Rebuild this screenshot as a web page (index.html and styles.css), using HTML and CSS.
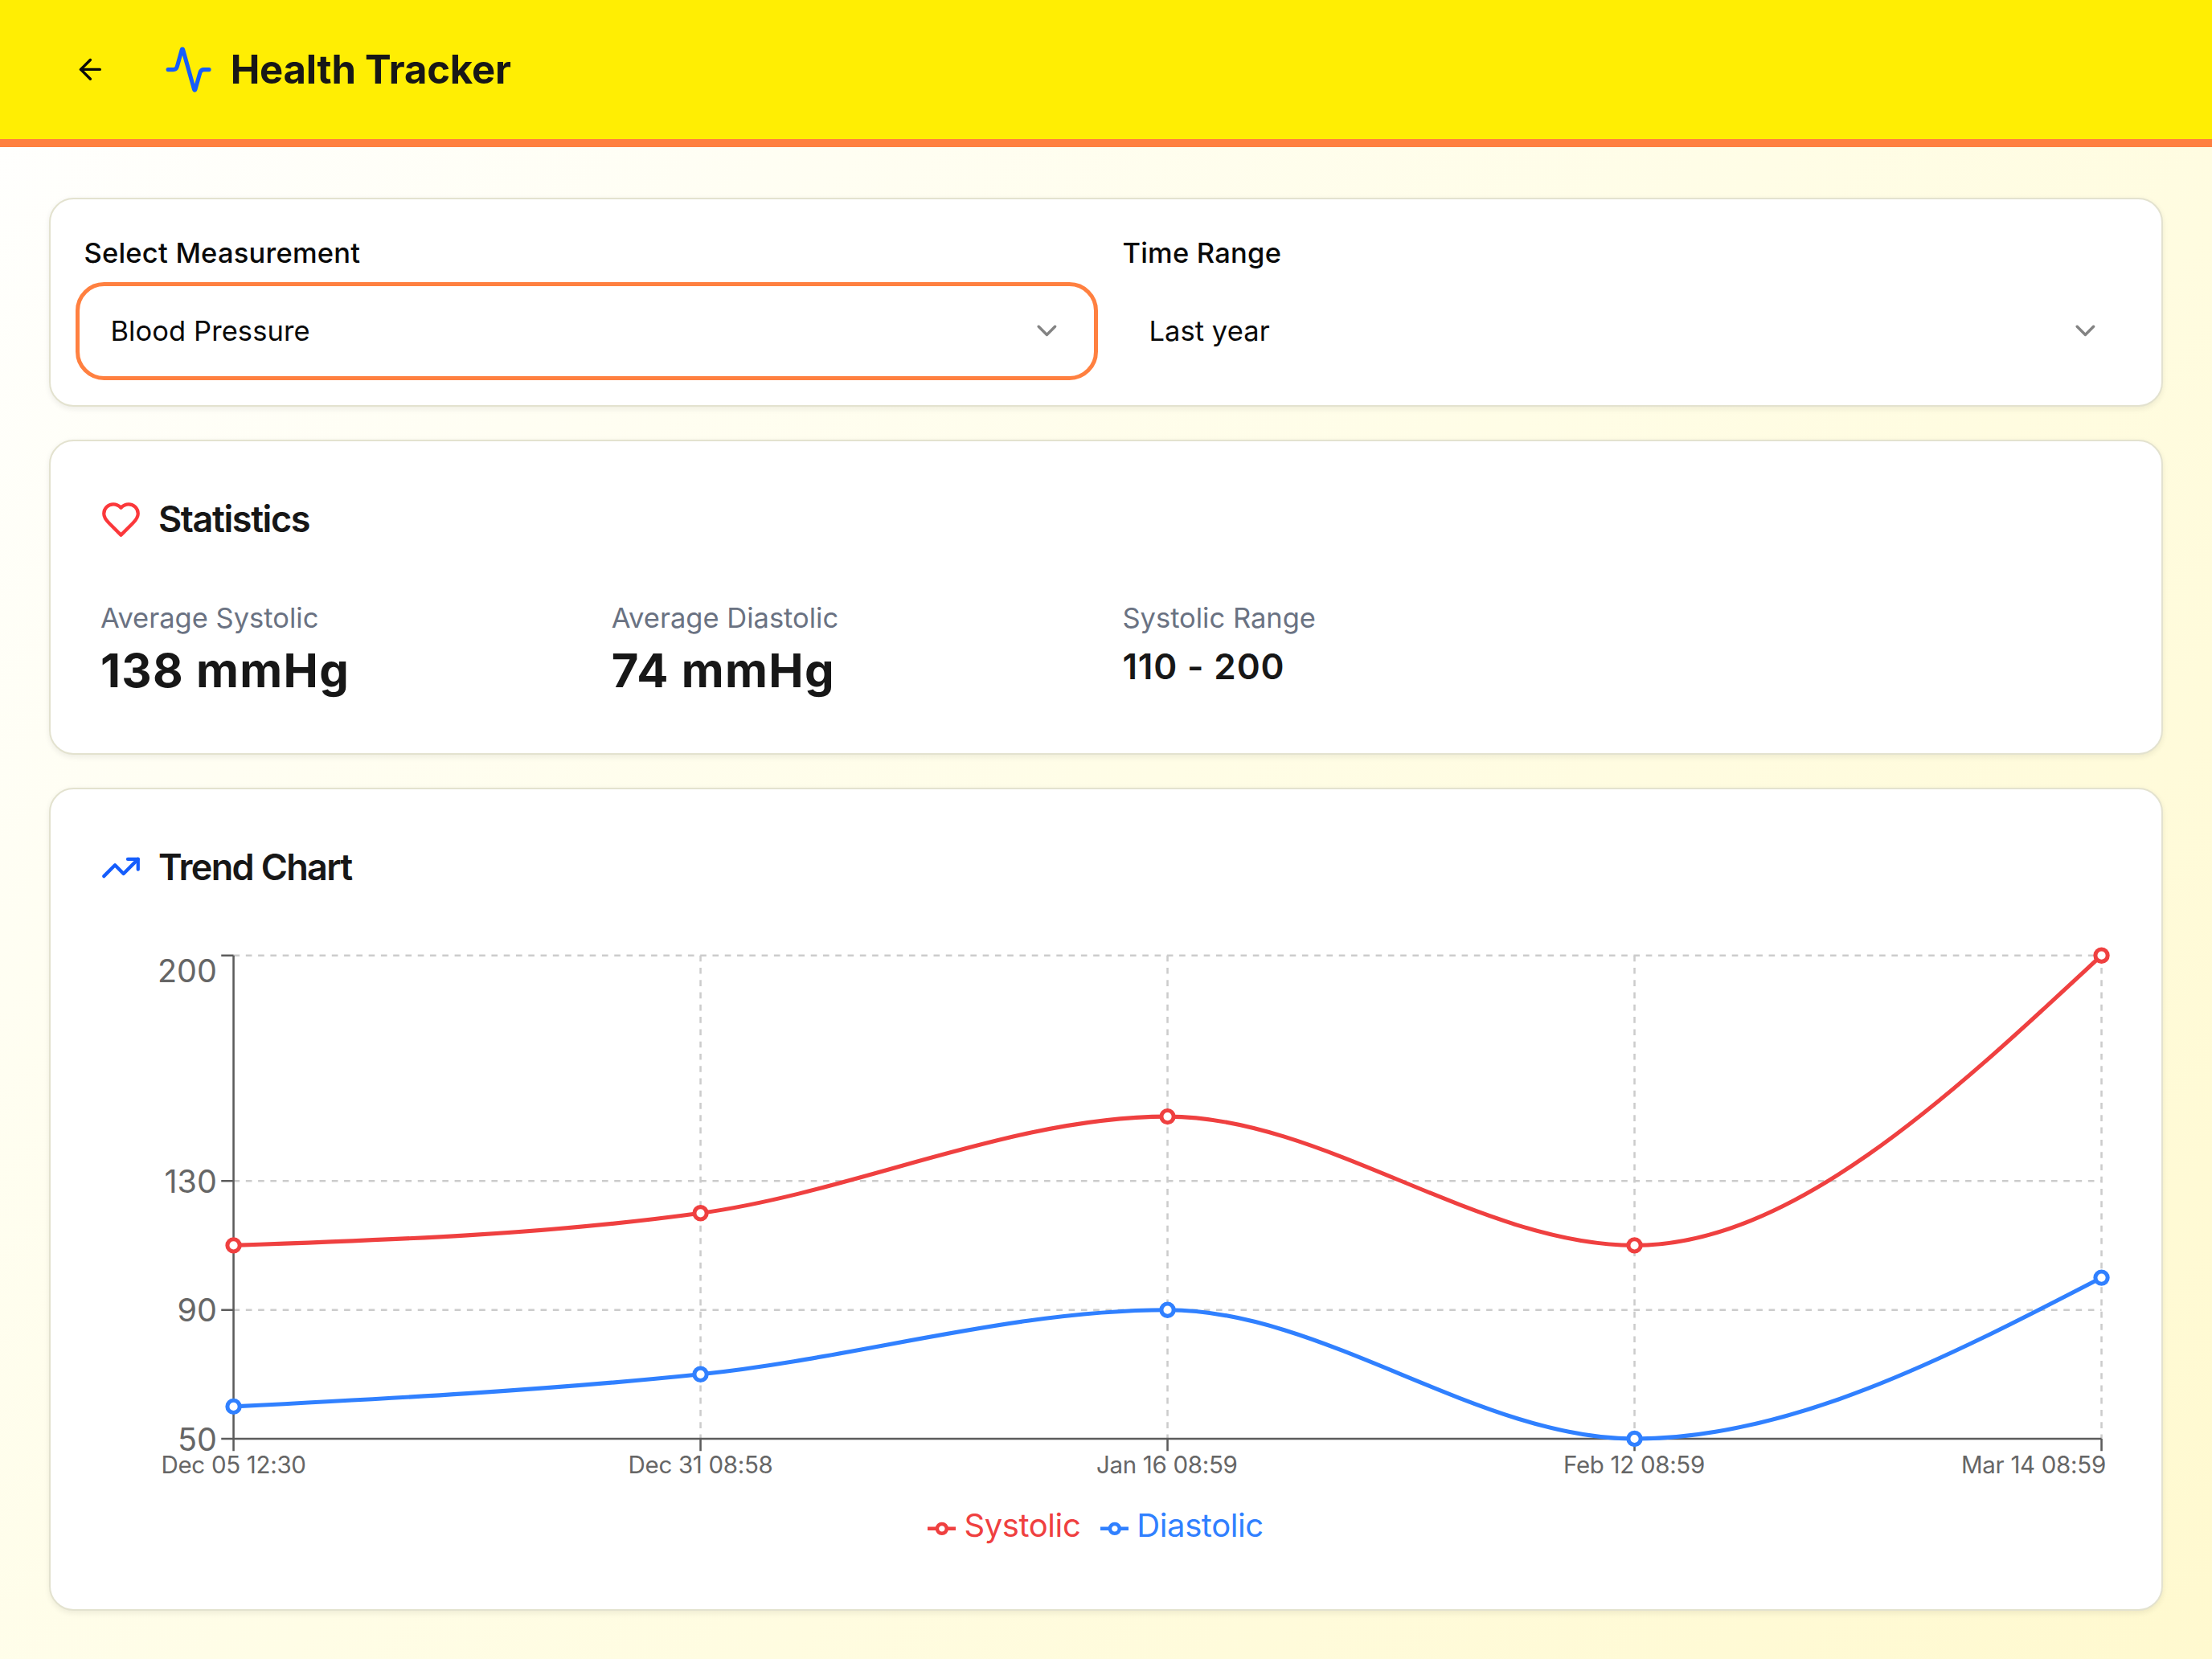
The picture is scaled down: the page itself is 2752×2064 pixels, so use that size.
FILE: index.html
```html
<!DOCTYPE html>
<html lang="en">
<head>
<meta charset="utf-8">
<title>Health Tracker</title>
<link rel="stylesheet" href="styles.css">
</head>
<body>
<header class="header">
  <button class="back" aria-label="Back">
    <svg class="icon icon-sm" viewBox="0 0 24 24"><path d="m12 19-7-7 7-7"/><path d="M19 12H5"/></svg>
  </button>
  <svg class="icon icon-lg blue" viewBox="0 0 24 24"><path d="M22 12h-2.48a2 2 0 0 0-1.93 1.46l-2.35 8.36a.25.25 0 0 1-.48 0L9.24 2.18a.25.25 0 0 0-.48 0l-2.35 8.36A2 2 0 0 1 4.49 12H2"/></svg>
  <h1 class="title">Health Tracker</h1>
</header>

<main class="main">
  <section class="card filters">
    <div class="field">
      <label class="label">Select Measurement</label>
      <button class="select select-focused">
        <span class="select-text">Blood Pressure</span>
        <svg class="icon icon-sm chevron" viewBox="0 0 24 24"><path d="m6 9 6 6 6-6"/></svg>
      </button>
    </div>
    <div class="field">
      <label class="label">Time Range</label>
      <button class="select">
        <span class="select-text">Last year</span>
        <svg class="icon icon-sm chevron" viewBox="0 0 24 24"><path d="m6 9 6 6 6-6"/></svg>
      </button>
    </div>
  </section>

  <section class="card panel stats-card">
    <h2 class="card-title">
      <svg class="icon icon-md red" viewBox="0 0 24 24"><path d="M19 14c1.49-1.46 3-3.21 3-5.5A5.5 5.5 0 0 0 16.5 3c-1.76 0-3 .5-4.5 2-1.5-1.5-2.74-2-4.5-2A5.5 5.5 0 0 0 2 8.5c0 2.3 1.5 4.05 3 5.5l7 7Z"/></svg>
      <span class="card-title-text">Statistics</span>
    </h2>
    <div class="stats">
      <div><p class="stat-label">Average Systolic</p><p class="stat-value">138 mmHg</p></div>
      <div><p class="stat-label">Average Diastolic</p><p class="stat-value">74 mmHg</p></div>
      <div><p class="stat-label">Systolic Range</p><p class="stat-range">110 - 200</p></div>
    </div>
  </section>

  <section class="card panel chart-card">
    <h2 class="card-title">
      <svg class="icon icon-md blue" viewBox="0 0 24 24"><polyline points="22 7 13.5 15.5 8.5 10.5 2 17"/><polyline points="16 7 22 7 22 13"/></svg>
      <span class="card-title-text trend-text">Trend Chart</span>
    </h2>
    <svg class="chart" viewBox="124.85 1176 2502.3 680">
      <g class="grid">
        <path d="M290.4 1188.7H2614.4M290.4 1469.3H2614.4M290.4 1629.7H2614.4"/>
        <path d="M871.4 1188.7V1790M1452.4 1188.7V1790M2033.4 1188.7V1790M2614.4 1188.7V1790"/>
      </g>
      <g class="axis">
        <path d="M290.4 1188.7V1790M290.4 1790H2614.4"/>
        <path d="M275.1 1188.7H290.4M275.1 1469.3H290.4M275.1 1629.7H290.4M275.1 1790H290.4"/>
        <path d="M290.4 1790V1805.3M871.4 1790V1805.3M1452.4 1790V1805.3M2033.4 1790V1805.3M2614.4 1790V1805.3"/>
      </g>
      <g class="y-ticks">
        <text x="269.7" y="1221.7">200</text>
        <text x="269.7" y="1483.7">130</text>
        <text x="269.7" y="1644">90</text>
        <text x="269.7" y="1804.7">50</text>
      </g>
      <g class="x-ticks">
        <text x="290.4" y="1833.3">Dec 05 12:30</text>
        <text x="871.4" y="1833.3">Dec 31 08:58</text>
        <text x="1451.6" y="1833.3">Jan 16 08:59</text>
        <text x="2032.8" y="1833.3">Feb 12 08:59</text>
        <text x="2529.8" y="1833.3">Mar 14 08:59</text>
      </g>
      <g class="series systolic">
        <path d="M290.4 1549.4C484.1 1542.7 677.7 1536 871.4 1509.3C1065.1 1482.6 1258.7 1389.1 1452.4 1389.1C1646.1 1389.1 1839.7 1549.4 2033.4 1549.4C2227.1 1549.4 2420.7 1369.1 2614.4 1188.7"/>
        <circle cx="290.4" cy="1549.4" r="7.64"/><circle cx="871.4" cy="1509.3" r="7.64"/><circle cx="1452.4" cy="1389.1" r="7.64"/><circle cx="2033.4" cy="1549.4" r="7.64"/><circle cx="2614.4" cy="1188.7" r="7.64"/>
      </g>
      <g class="series diastolic">
        <path d="M290.4 1749.9C484.1 1739.9 677.7 1729.8 871.4 1709.8C1065.1 1689.8 1258.7 1629.7 1452.4 1629.7C1646.1 1629.7 1839.7 1790 2033.4 1790C2227.1 1790 2420.7 1689.8 2614.4 1589.6"/>
        <circle cx="290.4" cy="1749.9" r="7.64"/><circle cx="871.4" cy="1709.8" r="7.64"/><circle cx="1452.4" cy="1629.7" r="7.64"/><circle cx="2033.4" cy="1790" r="7.64"/><circle cx="2614.4" cy="1589.6" r="7.64"/>
      </g>
    </svg>
    <div class="legend">
      <span class="legend-item systolic"><svg class="legend-icon" viewBox="0 0 32 32"><path d="M0 16h10.67A5.33 5.33 0 1 1 21.33 16H32M21.33 16A5.33 5.33 0 1 1 10.67 16"/></svg>Systolic</span>
      <span class="legend-item diastolic"><svg class="legend-icon" viewBox="0 0 32 32"><path d="M0 16h10.67A5.33 5.33 0 1 1 21.33 16H32M21.33 16A5.33 5.33 0 1 1 10.67 16"/></svg>Diastolic</span>
    </div>
  </section>
</main>
</body>
</html>
```
FILE: styles.css
```css
* { box-sizing: border-box; }

body {
  margin: 0;
  min-height: 2064px;
  font-family: Inter, "Liberation Sans", sans-serif;
  color: #0a0a0a;
  background: linear-gradient(135deg, #ffffff 0%, #fffde6 50%, #fff9cf 100%);
}

h1, h2, p { margin: 0; }

button {
  font: inherit;
  color: inherit;
  background: none;
  border: 0;
  padding: 0;
}

/* Icons */
.icon {
  flex: none;
  fill: none;
  stroke: currentColor;
  stroke-width: 2;
  stroke-linecap: round;
  stroke-linejoin: round;
}
.icon-sm { width: 40.8px; height: 40.8px; }
.icon-md { width: 51px; height: 51px; }
.icon-lg { width: 61.2px; height: 61.2px; }
.blue { color: #155dfc; }
.red { color: #fb383b; }

/* Header */
.header {
  display: flex;
  align-items: center;
  height: 183px;
  padding: 0 61.15px;
  background: #ffee03;
  border-bottom: 10px solid #ff8040;
}
.back {
  display: flex;
  align-items: center;
  justify-content: center;
  width: 102px;
  height: 102px;
  margin-right: 40.8px;
}
.title {
  margin-left: 21.5px;
  font-size: 49px;
  line-height: 71px;
  font-weight: 700;
  letter-spacing: -0.2px;
  color: #171717;
}

/* Cards */
.main {
  display: flex;
  flex-direction: column;
  gap: 41px;
  padding: 63px 61.15px 61px;
}
.card {
  background: #fff;
  border: 2.55px solid #e3e2cf;
  border-radius: 30.6px;
  box-shadow: 0 2.5px 7px rgba(0, 0, 0, .07);
}
.filters {
  display: grid;
  grid-template-columns: 1fr 1fr;
  gap: 40.8px;
  height: 259.7px;
  padding: 41.3px;
}
.field {
  display: flex;
  flex-direction: column;
  gap: 20.4px;
}
.label {
  font-size: 34.5px;
  line-height: 51px;
  font-weight: 500;
  letter-spacing: 0.23px;
}
.select {
  display: flex;
  align-items: center;
  justify-content: space-between;
  height: 102px;
  padding: 0 33px;
  border-radius: 25.5px;
}
.select-focused {
  outline: 5.1px solid #ff8040;
  outline-offset: 5.1px;
}
.select-text {
  font-size: 34.5px;
  letter-spacing: 0.08px;
}
.chevron { opacity: .5; }

.panel {
  display: flex;
  flex-direction: column;
  gap: 61.2px;
  padding: 61.8px;
}
.stats-card { height: 392.4px; }
.chart-card { height: 1023.5px; }
.card-title {
  display: flex;
  align-items: center;
  gap: 21px;
  height: 71.3px;
  font-size: 45px;
  line-height: 71px;
  font-weight: 600;
  color: #171717;
}
.card-title-text {
  letter-spacing: -1.4px;
  padding-bottom: 2px;
}
.trend-text { letter-spacing: -1.65px; }

/* Statistics */
.stats {
  display: grid;
  grid-template-columns: repeat(4, 1fr);
  gap: 40.8px;
}
.stat-label {
  font-size: 34.5px;
  line-height: 51px;
  color: #6a7282;
}
.stat-value {
  font-size: 58px;
  line-height: 80.4px;
  font-weight: 700;
  letter-spacing: 1.3px;
  color: #171717;
}
.stat-range {
  font-size: 44px;
  line-height: 70.6px;
  font-weight: 600;
  letter-spacing: 0.85px;
  color: #171717;
}

/* Chart */
.chart {
  display: block;
  flex: none;
  width: 2502.3px;
  height: 680px;
}
.grid {
  fill: none;
  stroke: #ccc;
  stroke-width: 2.55;
  stroke-dasharray: 7.64 7.64;
}
.axis {
  fill: none;
  stroke: #5c5c5c;
  stroke-width: 2.55;
}
.y-ticks {
  font-size: 39.5px;
  fill: #666;
  text-anchor: end;
}
.x-ticks {
  font-size: 29.5px;
  letter-spacing: -0.3px;
  fill: #666;
  text-anchor: middle;
}
.systolic { color: #ef4040; }
.diastolic { color: #3080ff; }
.series path, .series circle {
  fill: none;
  stroke: currentColor;
  stroke-width: 5.1;
}
.series circle { fill: #fff; }

.legend {
  display: flex;
  justify-content: center;
  gap: 24.3px;
  margin-top: -45.5px;
  padding-right: 26.5px;
  font-size: 40px;
  line-height: 51px;
  letter-spacing: -0.4px;
}
.legend-item {
  display: flex;
  align-items: center;
  gap: 10px;
}
.legend-icon {
  width: 35.7px;
  height: 35.7px;
  margin-top: 9px;
  fill: none;
  stroke: currentColor;
  stroke-width: 4;
}
```
